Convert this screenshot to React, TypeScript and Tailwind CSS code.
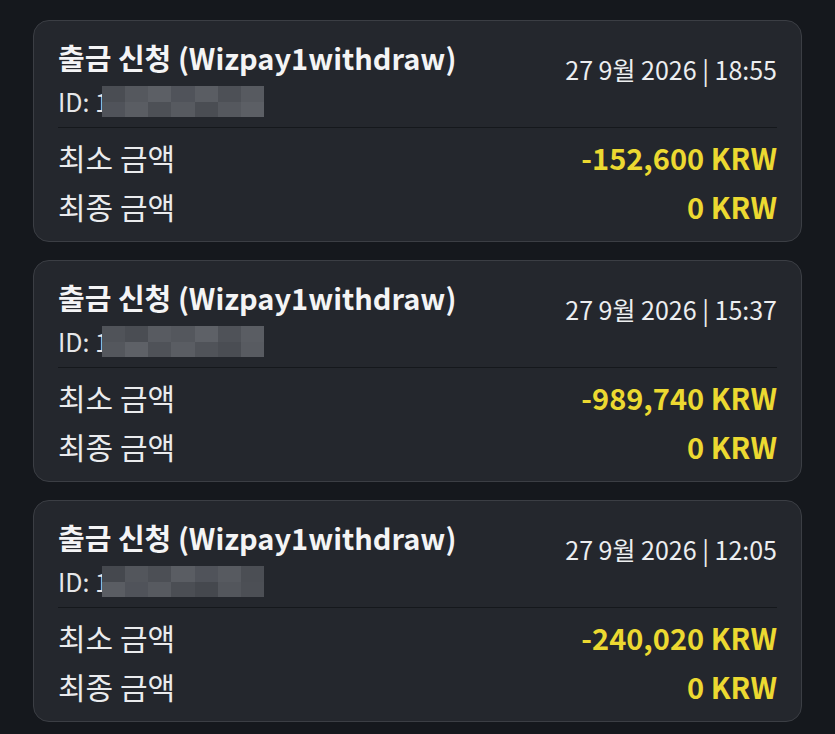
const items = [
  { time: "18:55", min: "-152,600 KRW", mosaic: ["#4a4d53", "#55585e", "#5c5f65", "#50535a", "#5a5d63", "#4d5056", "#575a60"] },
  { time: "15:37", min: "-989,740 KRW", mosaic: ["#505359", "#4a4d53", "#585b61", "#54575d", "#5e6167", "#4f5258", "#5a5d63"] },
  { time: "12:05", min: "-240,020 KRW", mosaic: ["#45484e", "#53565c", "#4c4f55", "#5a5d63", "#50535a", "#575a60", "#4b4e54"] },
];

function Mosaic({ colors }: { colors: string[] }) {
  // blurred-out id digits
  return (
    <div className="absolute left-[44px] top-[3px] flex h-[31px] w-[162px] overflow-hidden">
      {colors.map((c, i) => (
        <div key={i} className="flex-1 h-full flex flex-col">
          <div className="flex-1" style={{ backgroundColor: c }} />
          <div className="flex-1" style={{ backgroundColor: colors[(i + 3) % colors.length] }} />
        </div>
      ))}
    </div>
  );
}

function Card({ time, min, mosaic }: { time: string; min: string; mosaic: string[] }) {
  return (
    <div className="rounded-[16px] border border-[#3b3e44] bg-[#24272d] px-[24px] pt-[19px] pb-[10px]">
      <div className="flex items-start justify-between">
        <div>
          <div className="text-[29px] leading-[34px] font-semibold text-[#f4f4f5]">출금 신청 (Wizpay1withdraw)</div>
          <div className="relative mt-[9px] text-[25px] leading-[36px] text-[#e6e7e9]">
            ID: 1
            <Mosaic colors={mosaic} />
          </div>
        </div>
        <div className="mt-[14px] text-[25px] leading-[30px] text-[#eceef0]">27 9월 2026 | {time}</div>
      </div>
      <div className="mt-[8px] border-t border-[#15181c]" />
      <div className="mt-[5px] flex items-center justify-between h-[49px]">
        <span className="text-[30px] text-[#eaebed]">최소 금액</span>
        <span className="text-[29px] font-semibold text-[#ecd931]">{min}</span>
      </div>
      <div className="flex items-center justify-between h-[49px]">
        <span className="text-[30px] text-[#eaebed]">최종 금액</span>
        <span className="text-[29px] font-semibold text-[#ecd931]">0 KRW</span>
      </div>
    </div>
  );
}

export default function App() {
  return (
    <div
      className="min-h-[734px] w-[835px] bg-[#15181d] pl-[33px] pr-[33px] pt-[20px] flex flex-col gap-[18px]"
      style={{ fontFamily: '"Noto Sans CJK KR", "Noto Sans", sans-serif' }}
    >
      {items.map((it) => (
        <Card key={it.time} {...it} />
      ))}
    </div>
  );
}
